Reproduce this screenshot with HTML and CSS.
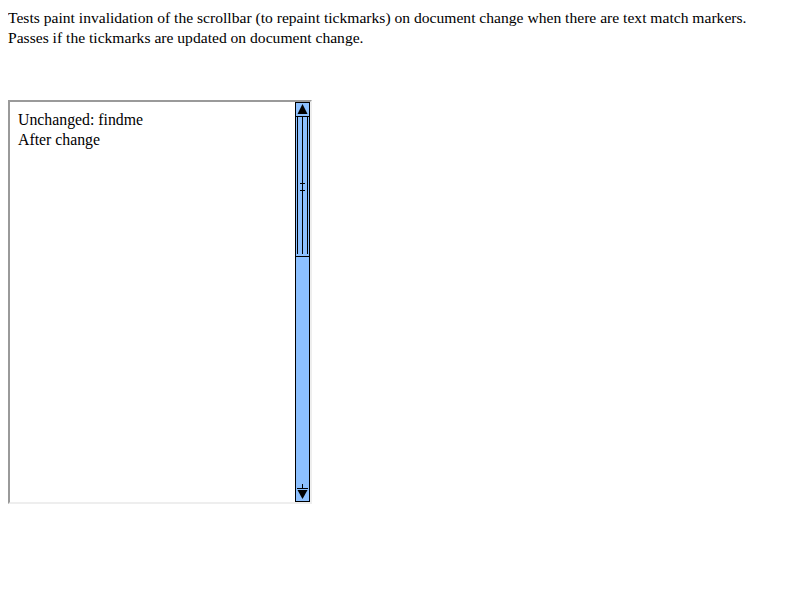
FILE: index.html
```html
<!DOCTYPE html>
<html>
<head>
<link rel="stylesheet" href="styles.css">
</head>
<body>
<div class="desc">Tests paint invalidation of the scrollbar (to repaint tickmarks) on document change when there are text match markers.<br>Passes if the tickmarks are updated on document change.</div>
<div class="frame">
  <div class="content">
    <div>Unchanged: findme</div>
    <div>After change</div>
  </div>
  <div class="sb">
    <div class="btn up"><svg width="13" height="13" viewBox="0 0 13 13"><polygon points="6.5,1 11.5,11 1.5,11" fill="#000"/></svg></div>
    <div class="thumb">
      <div class="thumb-inner">
        <div class="tick t1"></div>
        <div class="tick t2"></div>
      </div>
    </div>
    <div class="track"></div>
    <div class="btn down"><svg width="13" height="17" viewBox="0 0 13 17"><rect x="6" y="0" width="1" height="4" fill="#000"/><rect x="1" y="4" width="11" height="1" fill="#000"/><polygon points="1.5,6 11.5,6 6.5,15" fill="#000"/></svg></div>
  </div>
</div>
</body>
</html>
```
FILE: styles.css
```css
body {
  margin: 8px;
  font-family: "Liberation Serif", "Times New Roman", serif;
  font-size: 15.6px;
  line-height: 20px;
  color: #000;
  background: #fff;
}
.desc {
  margin-top: 0;
}
.frame {
  margin-top: 52px;
  width: 300px;
  height: 400px;
  border: 2px solid;
  border-color: #9a9a9a #eeeeee #eeeeee #9a9a9a;
  display: flex;
}
.content {
  flex: 1;
  padding: 8px 8px;
  font-size: 15.8px;
}
.sb {
  width: 15px;
  background: #8cc0ff;
  display: flex;
  flex-direction: column;
  box-sizing: border-box;
  border-left: 1px solid #000;
  border-right: 1px solid #000;
}
.btn {
  height: 15px;
  box-sizing: border-box;
  border-top: 1px solid #000;
  border-bottom: 1px solid #000;
  display: flex;
  justify-content: center;
}
.btn.down {
  height: 18px;
  border-top: none;
  border-bottom: 1px solid #000;
}
.thumb {
  height: 140px;
  box-sizing: border-box;
  border-bottom: 1px solid #000;
  padding: 0 1px 2px;
  display: flex;
}
.thumb-inner {
  flex: 1;
  border-left: 1px solid #000;
  border-right: 1px solid #000;
  position: relative;
}
.thumb-inner::before {
  content: "";
  position: absolute;
  left: 4px;
  top: 0;
  bottom: 0;
  width: 1px;
  background: #000;
}
.tick {
  position: absolute;
  left: 2px;
  width: 5px;
  height: 1px;
  background: #000;
}
.t1 { top: 66px; }
.t2 { top: 73px; }
.track {
  flex: 1;
}
```
